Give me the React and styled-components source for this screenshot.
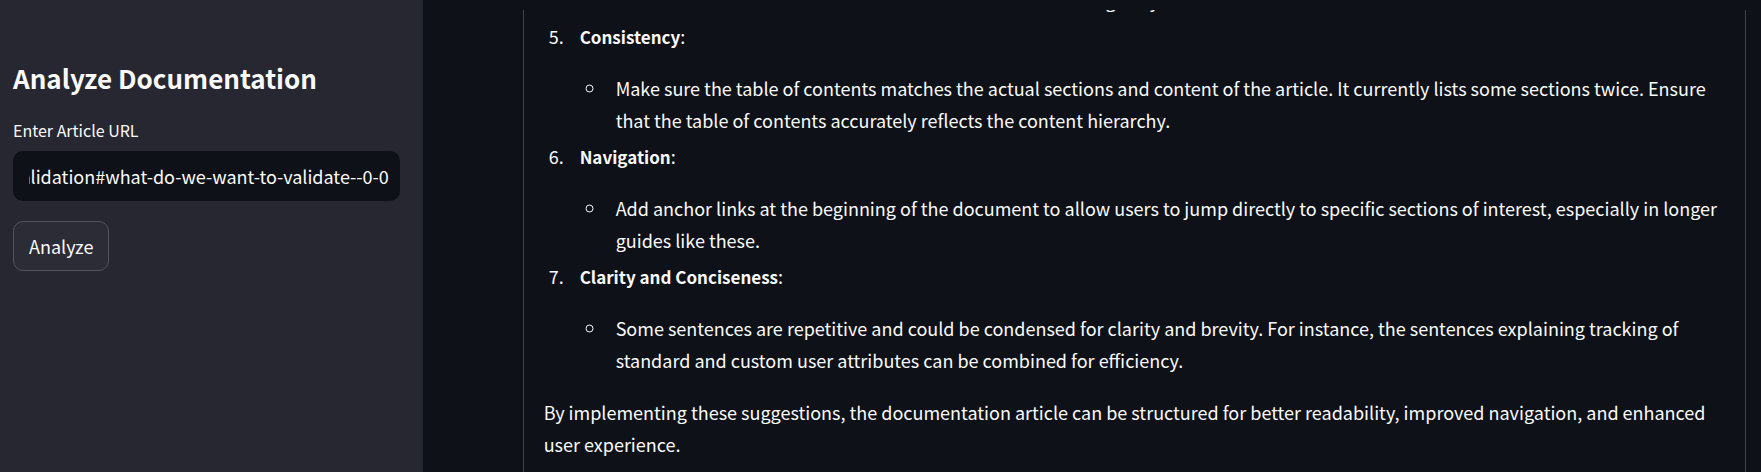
import React, { useLayoutEffect, useRef, useState } from "react";
import styled, { createGlobalStyle } from "styled-components";

const GlobalStyle = createGlobalStyle`
  * { box-sizing: border-box; }
  body {
    margin: 0;
    overflow: hidden;
    background: #0e1117;
    color: #fafafa;
    font-family: "Noto Sans CJK JP", "Noto Sans", sans-serif;
    font-size: 18px;
    line-height: 32px;
  }
`;

const Page = styled.div`
  display: flex;
  height: 100vh;
`;

const Sidebar = styled.aside`
  width: 24%;
  flex: none;
  padding: 60px 23px 0 13px;
  background: #262730;
`;

const Title = styled.h2`
  margin: 0 0 18px;
  font-size: 26px;
  line-height: 36px;
  font-weight: 700;
`;

const Form = styled.form`
  display: flex;
  flex-direction: column;
  align-items: flex-start;
`;

const Label = styled.label`
  margin-bottom: 5px;
  font-size: 16px;
  line-height: 32px;
`;

const UrlInput = styled.input`
  width: 100%;
  height: 50px;
  padding: 0 11px 0 16px;
  border: 0;
  border-radius: 10px;
  outline: none;
  background: #0e1117;
  color: inherit;
  font: inherit;
`;

const Button = styled.button`
  height: 50px;
  margin-top: 20px;
  padding: 0 15px;
  border: 1px solid #53545b;
  border-radius: 10px;
  background: #2b2c36;
  color: inherit;
  font: inherit;
`;

const Main = styled.main`
  flex: 1;
  min-width: 0;
  margin: 10px 15px 0 100px;
  overflow: hidden;
`;

const Panel = styled.section`
  min-height: calc(100% + 26px);
  margin-top: -26px;
  padding: 0 20px;
  border: solid #3f4147;
  border-width: 0 1px;
`;

const Topics = styled.ol`
  margin: 0 0 20px;
  padding-left: 36px;
  list-style: none;
`;

const Topic = styled.li`
  margin-top: 4px;
`;

const TopicHeading = styled.p`
  display: flex;
  margin: 0 0 20px -36px;
`;

const Number = styled.span`
  width: 36px;
  padding-left: 5px;
`;

const Notes = styled.ul`
  margin: 0;
  padding-left: 27px;
  list-style: circle;
`;

const Note = styled.li`
  padding-left: 9px;
`;

const Closing = styled.p`
  margin: 0;
`;

const Strong = styled.strong`
  font-size: 17px;
  line-height: 1;
  font-weight: 700;
`;

const topics = [
  {
    number: 5,
    title: "Consistency",
    note: "Make sure the table of contents matches the actual sections and content of the article. It currently lists some sections twice. Ensure that the table of contents accurately reflects the content hierarchy.",
  },
  {
    number: 6,
    title: "Navigation",
    note: "Add anchor links at the beginning of the document to allow users to jump directly to specific sections of interest, especially in longer guides like these.",
  },
  {
    number: 7,
    title: "Clarity and Conciseness",
    note: "Some sentences are repetitive and could be condensed for clarity and brevity. For instance, the sentences explaining tracking of standard and custom user attributes can be combined for efficiency.",
  },
];

export default function App() {
  const [url, setUrl] = useState("https://docs.example.com/validation#what-do-we-want-to-validate--0-0");
  const input = useRef(null);

  useLayoutEffect(() => {
    input.current.scrollLeft = input.current.scrollWidth;
  }, []);

  return (
    <>
      <GlobalStyle />
      <Page>
        <Sidebar>
          <Title>Analyze Documentation</Title>
          <Form onSubmit={(e) => e.preventDefault()}>
            <Label htmlFor="url">Enter Article URL</Label>
            <UrlInput id="url" ref={input} type="text" value={url} onChange={(e) => setUrl(e.target.value)} />
            <Button type="submit">Analyze</Button>
          </Form>
        </Sidebar>
        <Main>
          <Panel>
            <Topics>
              <li>
                <Notes>
                  <Note>Ensure that all sections or subsections of the article flow logically.</Note>
                </Notes>
              </li>
              {topics.map((t) => (
                <Topic key={t.number}>
                  <TopicHeading>
                    <Number>{t.number}.</Number>
                    <span><Strong>{t.title}</Strong>:</span>
                  </TopicHeading>
                  <Notes>
                    <Note>{t.note}</Note>
                  </Notes>
                </Topic>
              ))}
            </Topics>
            <Closing>
              By implementing these suggestions, the documentation article can be structured for better readability, improved navigation, and enhanced user experience.
            </Closing>
          </Panel>
        </Main>
      </Page>
    </>
  );
}
